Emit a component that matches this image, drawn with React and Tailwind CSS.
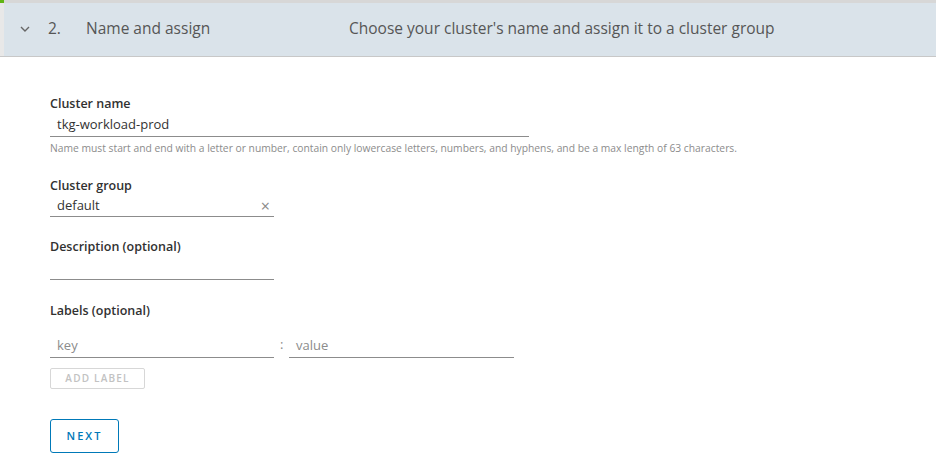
import React from "react";

const font = { fontFamily: "'Open Sans', 'Noto Sans', sans-serif" };

const Field = ({ label, value, width, h = "h-[24px]", placeholder, clear, className = "" }) => (
  <div className={className}>
    {label && <div className="text-[12.5px] font-semibold text-[#313131] leading-[18px]">{label}</div>}
    <div className={`flex items-center border-b border-[#8c8c8c] ${h} ${width}`}>
      <span className={`flex-1 pl-[7px] text-[13px] ${placeholder ? "text-[#8c8c8c]" : "text-[#333]"}`}>
        {value}
      </span>
      {clear && <span className="pr-[4px] text-[#888] text-[16px] leading-none">×</span>}
    </div>
  </div>
);

export default function App() {
  return (
    <div className="w-[936px] h-[470px] bg-white" style={font}>
      {/* header */}
      <div className="relative flex border-t-[3px] border-b border-t-[#d7d7d7] border-b-[#c8c8c8] h-[57px]">
        <div className="absolute left-0 top-[-3px] w-[4px] h-[3px] bg-[#60b515]" />
        <div className="w-[4px] bg-[#e8e8e8]" />
        <div className="flex-1 flex items-center pl-[15px] pb-[2px] bg-[#dae3ea] text-[15.5px] text-[#565656]">
          <svg className="w-[12px] h-[12px]" viewBox="0 0 12 12" fill="none" stroke="#666" strokeWidth="1.4">
            <path d="M2 4l4 4 4-4" />
          </svg>
          <span className="ml-[17px] w-[38px]">2.</span>
          <span className="w-[263px]">Name and assign</span>
          <span>Choose your cluster's name and assign it to a cluster group</span>
        </div>
      </div>

      <div className="pl-[50px] pt-[38px]">
        <Field label="Cluster name" value="tkg-workload-prod" width="w-[479px]" />
        <div className="mt-[4px] text-[10.3px] leading-[14px] text-[#8c8c8c]">
          Name must start and end with a letter or number, contain only lowercase letters, numbers, and hyphens, and be a max length of 63 characters.
        </div>

        <Field className="mt-[22px]" label="Cluster group" value="default" width="w-[224px]" h="h-[22px]" clear />

        <Field className="mt-[21px]" label="Description (optional)" value="" width="w-[224px]" />

        <div className="mt-[22px] text-[12.5px] font-semibold text-[#313131] leading-[18px]">Labels (optional)</div>
        <div className="mt-[14px] flex items-end">
          <Field value="key" placeholder width="w-[224px]" />
          <span className="w-[15px] pl-[6px] text-[13px] text-[#8c8c8c] mb-[4px]">:</span>
          <Field value="value" placeholder width="w-[225px]" />
        </div>
        <button className="mt-[10px] w-[95px] h-[21px] border border-[#d7d7d7] rounded-[2px] text-[10px] tracking-[1.2px] text-[#c2c2c2] font-semibold">
          ADD LABEL
        </button>
        <div>
          <button className="mt-[30px] w-[69px] h-[34px] border border-[#0079b8] rounded-[3px] text-[11px] tracking-[2px] text-[#0079b8] font-semibold">
            NEXT
          </button>
        </div>
      </div>
    </div>
  );
}
